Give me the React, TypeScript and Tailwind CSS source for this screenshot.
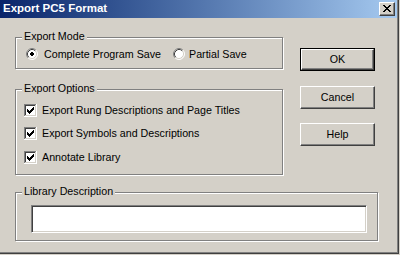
import React from "react";

const CHECK: [number, number, number][] = [
  [6, 0, 1],
  [5, 1, 2],
  [0, 2, 1],
  [4, 2, 3],
  [0, 3, 2],
  [3, 3, 3],
  [0, 4, 5],
  [1, 5, 3],
  [2, 6, 1],
];

function Checkbox() {
  return (
    <svg width="13" height="13" viewBox="0 0 13 13" shapeRendering="crispEdges" className="shrink-0">
      <rect x="0" y="0" width="13" height="13" fill="#ffffff" />
      <rect x="0" y="0" width="12" height="1" fill="#808080" />
      <rect x="0" y="0" width="1" height="12" fill="#808080" />
      <rect x="1" y="1" width="10" height="1" fill="#404040" />
      <rect x="1" y="1" width="1" height="10" fill="#404040" />
      <rect x="1" y="11" width="11" height="1" fill="#d4d0c8" />
      <rect x="11" y="1" width="1" height="11" fill="#d4d0c8" />
      {CHECK.map(([x, y, w], i) => (
        <rect key={i} x={3 + x} y={3 + y} width={w} height="1" fill="#000000" />
      ))}
    </svg>
  );
}

function Radio({ checked }: { checked: boolean }) {
  return (
    <svg width="12" height="12" viewBox="0 0 12 12" className="shrink-0">
      <circle cx="6" cy="6" r="5" fill="#ffffff" />
      <path d="M 9.89 2.11 A 5.5 5.5 0 0 0 2.11 9.89" stroke="#808080" strokeWidth="1" fill="none" />
      <path d="M 9.89 2.11 A 5.5 5.5 0 0 1 2.11 9.89" stroke="#ffffff" strokeWidth="1" fill="none" />
      <path d="M 9.18 2.82 A 4.5 4.5 0 0 0 2.82 9.18" stroke="#404040" strokeWidth="1" fill="none" />
      <path d="M 9.18 2.82 A 4.5 4.5 0 0 1 2.82 9.18" stroke="#d4d0c8" strokeWidth="1" fill="none" />
      {checked && (
        <g shapeRendering="crispEdges">
          <rect x="4" y="5" width="4" height="2" fill="#000" />
          <rect x="5" y="4" width="2" height="4" fill="#000" />
        </g>
      )}
    </svg>
  );
}

const X_ROWS: [number, number][][] = [
  [[0, 2], [6, 2]],
  [[1, 2], [5, 2]],
  [[2, 4]],
  [[3, 2]],
  [[2, 4]],
  [[1, 2], [5, 2]],
  [[0, 2], [6, 2]],
];

function CloseButton() {
  return (
    <div className="w-[16px] h-[14px] bg-[#d4d0c8] border border-t-white border-l-white border-r-[#404040] border-b-[#404040] shadow-[inset_-1px_-1px_0_#808080] flex items-center justify-center">
      <svg width="8" height="7" viewBox="0 0 8 7" shapeRendering="crispEdges" className="mt-[-1px] ml-[-1px]">
        {X_ROWS.map((row, y) =>
          row.map(([x, w], i) => <rect key={`${y}-${i}`} x={x} y={y} width={w} height="1" fill="#000" />)
        )}
      </svg>
    </div>
  );
}

function Button({ label, isDefault }: { label: string; isDefault?: boolean }) {
  const inner = (
    <div className="w-full h-full bg-[#d4d0c8] border border-t-white border-l-white border-r-[#404040] border-b-[#404040] shadow-[inset_-1px_-1px_0_#808080] flex items-center justify-center text-[10.7px] text-black leading-none">
      {label}
    </div>
  );
  if (isDefault) {
    return <div className="w-[75px] h-[23px] border border-black">{inner}</div>;
  }
  return <div className="w-[75px] h-[23px]">{inner}</div>;
}

function GroupLabel({ text }: { text: string }) {
  return (
    <span className="absolute left-[6px] top-[-8px] px-[2px] bg-[#d4d0c8] text-[10.7px] leading-[13px] text-black">
      {text}
    </span>
  );
}

export default function App() {
  return (
    <div className="w-[400px] h-[255px] bg-[#d4d0c8] overflow-hidden font-['Liberation_Sans',Arial,sans-serif] text-black">
      <div className="w-[399px] h-[254px] border-r border-b border-[#404040] flex flex-col">
        <div className="flex-1 border-r border-b border-[#808080] flex flex-col">
          {/* Title bar */}
          <div className="h-[18px] bg-linear-to-r from-[#0a246a] to-[#a6caf0] flex items-center pl-[3px] pr-[2px]">
            <span className="text-white font-bold text-[11.5px] leading-none">Export PC5 Format</span>
            <div className="ml-auto">
              <CloseButton />
            </div>
          </div>

          {/* Body */}
          <div className="flex flex-col pl-[15px] pt-[19px]">
            <div className="flex">
              <div className="flex flex-col w-[268px]">
                {/* Export Mode */}
                <div className="relative h-[32px] border border-[#808080] shadow-[inset_1px_1px_0_#ffffff,1px_1px_0_#ffffff]">
                  <GroupLabel text="Export Mode" />
                  <div className="flex items-center pl-[10px] pt-[10px] text-[10.7px] leading-[12px]">
                    <div className="flex items-center w-[147px]">
                      <Radio checked />
                      <span className="ml-[6px]">Complete Program Save</span>
                    </div>
                    <div className="flex items-center">
                      <Radio checked={false} />
                      <span className="ml-[4px]">Partial Save</span>
                    </div>
                  </div>
                </div>

                {/* Export Options */}
                <div className="relative mt-[20px] h-[86px] border border-[#808080] shadow-[inset_1px_1px_0_#ffffff,1px_1px_0_#ffffff]">
                  <GroupLabel text="Export Options" />
                  <div className="flex flex-col pl-[8px] text-[10.7px] leading-[13px]">
                    <div className="flex items-center mt-[14px]">
                      <Checkbox />
                      <span className="ml-[5px]">Export Rung Descriptions and Page Titles</span>
                    </div>
                    <div className="flex items-center mt-[10px]">
                      <Checkbox />
                      <span className="ml-[5px]">Export Symbols and Descriptions</span>
                    </div>
                    <div className="flex items-center mt-[11px]">
                      <Checkbox />
                      <span className="ml-[5px]">Annotate Library</span>
                    </div>
                  </div>
                </div>
              </div>

              {/* Buttons */}
              <div className="flex flex-col ml-[17px] mt-[11px]">
                <Button label="OK" isDefault />
                <div className="mt-[15px]">
                  <Button label="Cancel" />
                </div>
                <div className="mt-[14px]">
                  <Button label="Help" />
                </div>
              </div>
            </div>

            {/* Library Description */}
            <div className="relative mt-[17px] w-[363px] h-[49px] border border-[#808080] shadow-[inset_1px_1px_0_#ffffff,1px_1px_0_#ffffff]">
              <GroupLabel text="Library Description" />
              <div className="ml-[15px] mt-[12px] w-[336px] h-[28px] bg-white border border-t-[#808080] border-l-[#808080] border-r-white border-b-white shadow-[inset_1px_1px_0_#404040,inset_-1px_-1px_0_#d4d0c8]" />
            </div>
          </div>
        </div>
      </div>
    </div>
  );
}
